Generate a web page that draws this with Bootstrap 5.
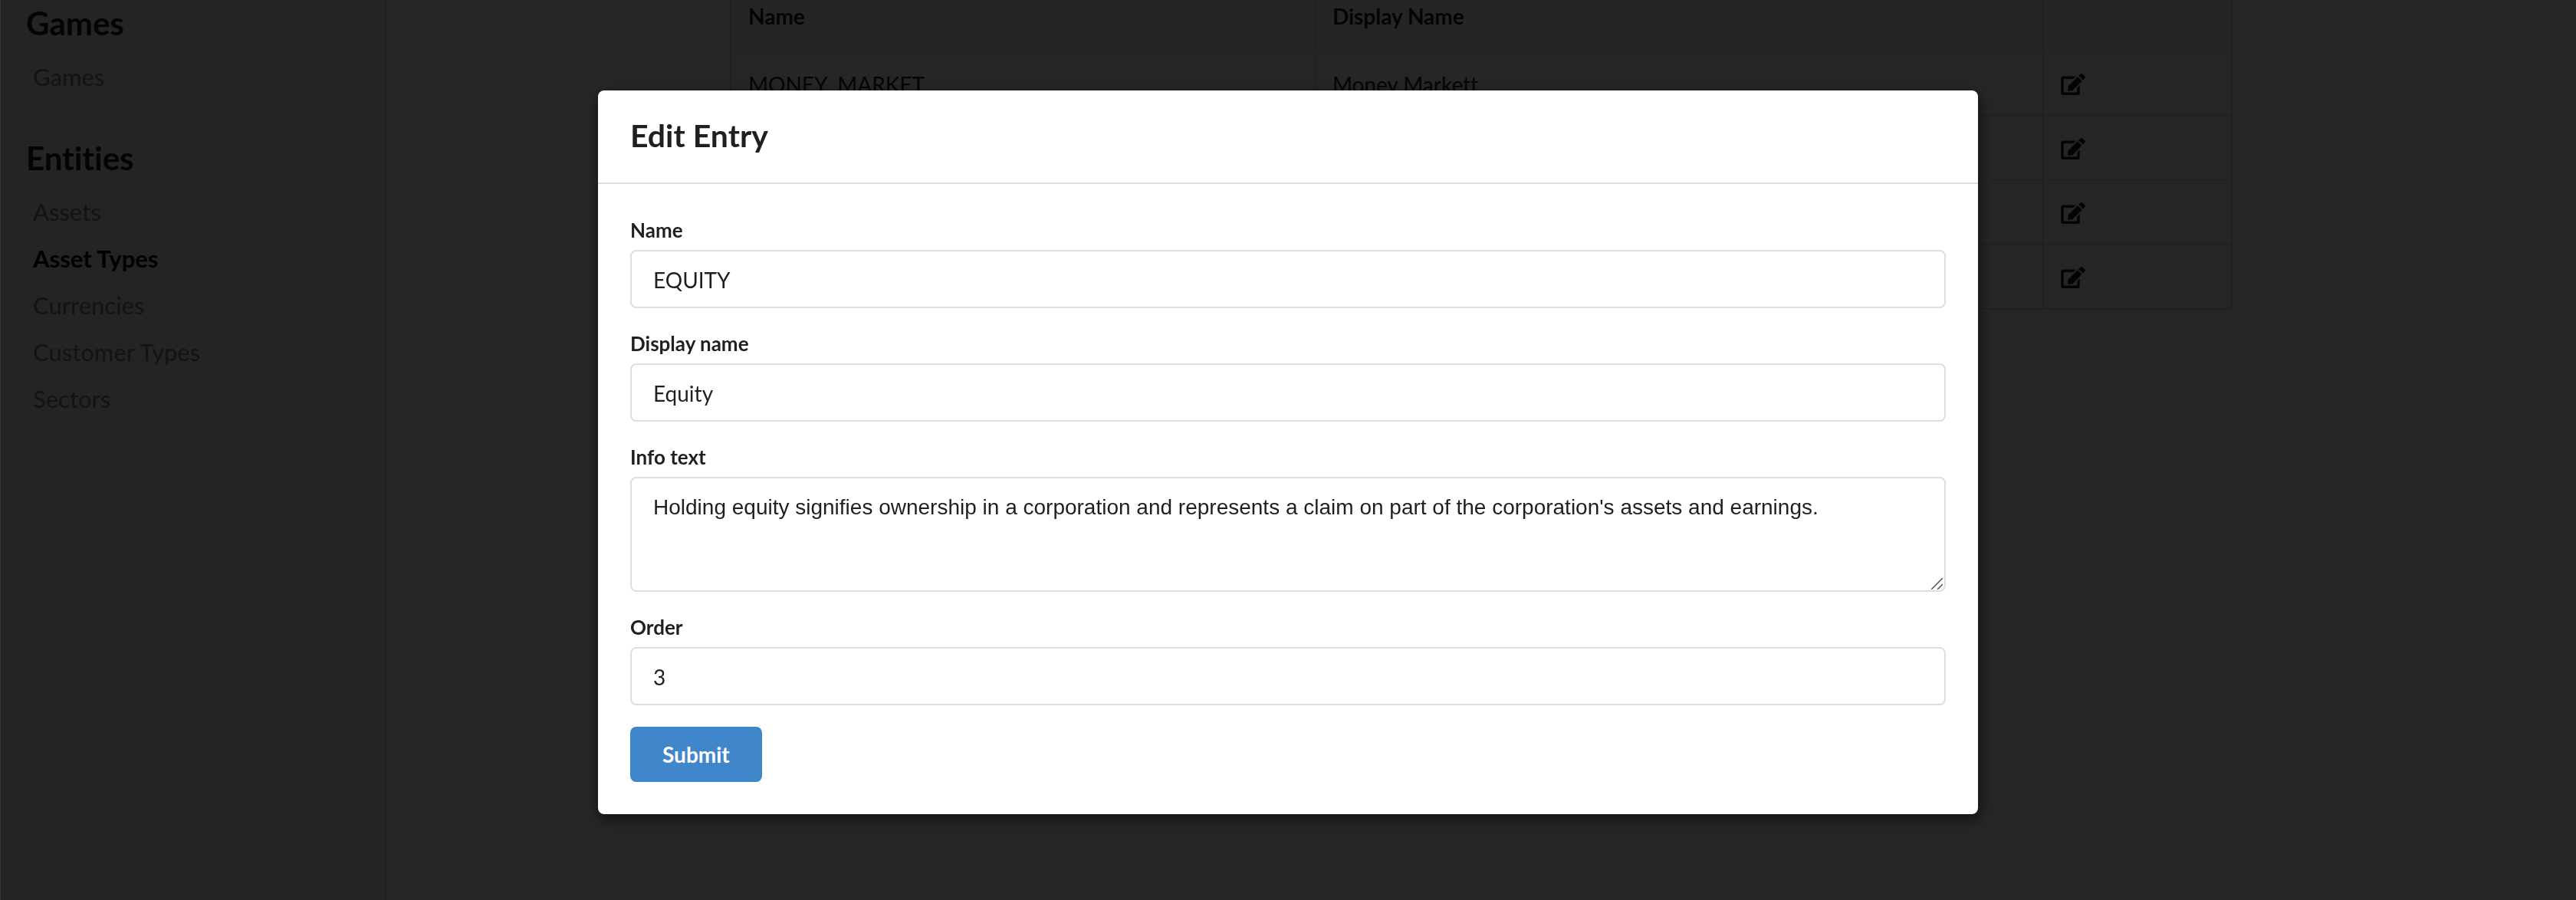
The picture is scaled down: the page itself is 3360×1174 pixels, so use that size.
<!DOCTYPE html>
<html lang="en">
<head>
<meta charset="utf-8">
<meta name="viewport" content="width=device-width, initial-scale=1">
<title>Asset Types</title>
<link href="https://cdn.jsdelivr.net/npm/bootstrap@5.3.0/dist/css/bootstrap.min.css" rel="stylesheet">
<style>
  body { font-family: Lato, "Liberation Sans", sans-serif; font-size: 28px; line-height: 36px; color: #1f1f1f; font-variant-ligatures: none; }
  .side-menu { width: 504px; background: #f0f0f0; border-right: 2px solid #d4d4d4; }
  .side-group { padding: 18px 34px 26px; }
  .side-group + .side-group { border-top: 1px solid #e2e2e2; }
  .side-group:first-child { padding-top: 0; }
  .side-title { font-size: 42px; line-height: 60px; font-weight: 700; margin: 0 0 10px; color: #1f1f1f; }
  .side-link { font-size: 31px; line-height: 61px; padding: 0 9px; color: #7f7f7f; text-decoration: none; }
  .side-link.active { font-weight: 700; color: #000; }
  .entries-wrap { max-width: 1960px; border: 2px solid #dedede; border-top: 0; border-radius: 0 0 8px 8px; }
  .entries { table-layout: fixed; margin: 0; color: inherit; }
  .entries th, .entries td { padding: 24px 24px 22px 22px; border-bottom: 2px solid #e4e4e4; border-right: 2px solid #e4e4e4; background: none; }
  .entries th { padding-top: 3px; padding-bottom: 27px; background: #f9f9f9; }
  .entries tr > :last-child { border-right: 0; }
  .entries tbody tr:last-child td { border-bottom: 0; }
  .edit-btn { color: #1f1f1f; line-height: 0; height: 36px; }
  .edit-btn svg { width: 32px; height: 28px; }
  .modal-backdrop { --bs-backdrop-opacity: .85; border-left: 1px solid #151515; }
  .entry-dialog { max-width: 1800px; margin: 118px auto; }
  .entry-dialog .modal-content { border: 0; border-radius: 8px; box-shadow: 2px 6px 14px 4px rgba(0,0,0,.3), 2px 6px 30px 4px rgba(0,0,0,.2); color: #1f1f1f; }
  .entry-dialog .modal-header { padding: 33px 42px 35px; border-bottom: 2px solid #dededf; }
  .entry-dialog .modal-title { font-size: 41px; line-height: 52px; font-weight: 700; }
  .entry-dialog .modal-body { padding: 42px; }
  .entry-form { gap: 28px; }
  .entry-form .form-label { font-size: 26px; line-height: 36px; font-weight: 700; margin-bottom: 8px; }
  .entry-form .form-control { font-size: 28px; line-height: 34px; padding: 20px 28px 18px; border: 2px solid #dededf; border-radius: 8px; color: #1f1f1f; }
  .entry-form textarea.form-control { font-family: "Liberation Sans", sans-serif; line-height: 36px; height: 150px; resize: none; }
  .grip { right: 4px; bottom: 3px; width: 15px; height: 15px; }
  .submit-btn { font-size: 28px; line-height: 28px; font-weight: 700; padding: 22px 42px; border: 0; border-radius: 8px; background: #4086cb; color: #fff; }
</style>
</head>
<body class="overflow-hidden">
<svg class="d-none" aria-hidden="true">
  <symbol id="edit" viewBox="0 0 576 512"><path fill="currentColor" d="M402.600 83.200l90.200 90.200c3.800 3.800 3.800 10 0 13.800L274.400 405.600l-92.800 10.300c-12.400 1.400-22.900-9.100-21.500-21.500l10.300-92.800L388.800 83.200c3.800-3.800 10-3.800 13.800 0zm162-22.900l-48.800-48.800c-15.200-15.200-39.900-15.200-55.200 0l-35.400 35.400c-3.800 3.800-3.800 10 0 13.800l90.200 90.200c3.800 3.800 10 3.800 13.800 0l35.400-35.400c15.200-15.300 15.200-40 0-55.200zM384 346.200V448H64V128h229.800c3.200 0 6.200-1.300 8.500-3.500l40-40c7.600-7.600 2.200-20.500-8.500-20.500H48C21.500 64 0 85.500 0 112v352c0 26.500 21.500 48 48 48h352c26.500 0 48-21.500 48-48V306.200c0-10.700-12.900-16-20.500-8.500l-40 40c-2.200 2.300-3.500 5.300-3.500 8.500z"/></symbol>
</svg>

<div class="d-flex min-vh-100">
  <nav class="side-menu flex-shrink-0" aria-label="Administration">
    <div class="side-group">
      <h2 class="side-title">Games</h2>
      <div class="d-flex flex-column"><a class="side-link" href="#">Games</a></div>
    </div>
    <div class="side-group">
      <h2 class="side-title">Entities</h2>
      <div class="d-flex flex-column">
        <a class="side-link" href="#">Assets</a>
        <a class="side-link active" href="#" aria-current="page">Asset Types</a>
        <a class="side-link" href="#">Currencies</a>
        <a class="side-link" href="#">Customer Types</a>
        <a class="side-link" href="#">Sectors</a>
      </div>
    </div>
  </nav>
  <main class="flex-grow-1">
    <div class="entries-wrap mx-auto">
      <table class="table entries">
        <colgroup><col style="width:38.900%"><col style="width:48.600%"><col></colgroup>
        <thead><tr><th scope="col">Name</th><th scope="col">Display Name</th><th></th></tr></thead>
        <tbody>
          <tr><td>MONEY_MARKET</td><td>Money Markett</td><td><button class="btn p-0 border-0 edit-btn d-flex align-items-center" aria-label="Edit"><svg><use href="#edit"/></svg></button></td></tr>
          <tr><td></td><td></td><td><button class="btn p-0 border-0 edit-btn d-flex align-items-center" aria-label="Edit"><svg><use href="#edit"/></svg></button></td></tr>
          <tr><td></td><td></td><td><button class="btn p-0 border-0 edit-btn d-flex align-items-center" aria-label="Edit"><svg><use href="#edit"/></svg></button></td></tr>
          <tr><td></td><td></td><td><button class="btn p-0 border-0 edit-btn d-flex align-items-center" aria-label="Edit"><svg><use href="#edit"/></svg></button></td></tr>
        </tbody>
      </table>
    </div>
  </main>
</div>

<div class="modal-backdrop show"></div>
<div class="modal d-block" role="dialog" aria-modal="true" aria-labelledby="entryTitle">
  <div class="modal-dialog entry-dialog">
    <div class="modal-content">
      <div class="modal-header"><h1 class="modal-title" id="entryTitle">Edit Entry</h1></div>
      <div class="modal-body">
        <form class="entry-form d-flex flex-column align-items-stretch">
          <div><label class="form-label d-block" for="name">Name</label><input class="form-control" id="name" type="text" value="EQUITY"></div>
          <div><label class="form-label d-block" for="display">Display name</label><input class="form-control" id="display" type="text" value="Equity"></div>
          <div>
            <label class="form-label d-block" for="info">Info text</label>
            <div class="position-relative">
              <textarea class="form-control d-block" id="info">Holding equity signifies ownership in a corporation and represents a claim on part of the corporation's assets and earnings.</textarea>
              <svg class="grip position-absolute" viewBox="0 0 15 15" aria-hidden="true"><path d="M0 15L15 0M8 15L15 8" stroke="#555" stroke-width="1.500" fill="none"/></svg>
            </div>
          </div>
          <div><label class="form-label d-block" for="order">Order</label><input class="form-control" id="order" type="text" inputmode="numeric" value="3"></div>
          <button class="btn submit-btn align-self-start" type="submit">Submit</button>
        </form>
      </div>
    </div>
  </div>
</div>
<script src="https://cdn.jsdelivr.net/npm/bootstrap@5.3.0/dist/js/bootstrap.bundle.min.js"></script>
</body>
</html>
